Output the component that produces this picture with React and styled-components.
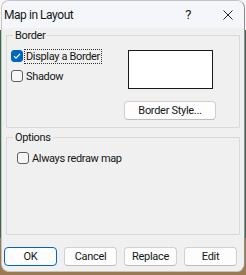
import React from 'react';
import styled, { createGlobalStyle } from 'styled-components';

const GlobalStyle = createGlobalStyle`
  html, body {
    margin: 0;
    padding: 0;
  }
  body {
    width: 246px;
    height: 275px;
    overflow: hidden;
    background: linear-gradient(#f6f6f8 0 30px, #3e6a48 30px 238px, #9b7a52 238px);
    font-family: Roboto, "Noto Sans", sans-serif;
    font-size: 11px;
    letter-spacing: -0.35px;
    color: #161616;
  }
`;

const Window = styled.div`
  box-sizing: border-box;
  margin-left: 1px;
  width: 244px;
  height: 272px;
  display: flex;
  flex-direction: column;
  background: #f0f0f0;
  border: 1px solid #c4c4c4;
  border-right-color: #8c8c8c;
  border-radius: 8px;
  overflow: hidden;
`;

const TitleBar = styled.div`
  height: 27px;
  flex: none;
  display: flex;
  align-items: center;
  padding-left: 2px;
  background: #f5f6f9;
  font-size: 12px;
  letter-spacing: -0.45px;
`;

const Title = styled.span`
  flex: 1;
`;

const TitleButton = styled.div`
  width: ${({ wide }) => wide}px;
  display: flex;
  justify-content: center;
  align-items: center;
  font-size: 13px;
  color: #222;
`;

const Body = styled.div`
  flex: 1;
  display: flex;
  flex-direction: column;
  padding: 1px 4px 0 4px;
`;

const Group = styled.fieldset`
  margin: 0 0 ${({ gap }) => gap}px 0;
  padding: 0;
  height: ${({ h }) => h}px;
  box-sizing: border-box;
  border: 1px solid #d9d9d9;
  border-radius: 1px;
  min-width: 0;
`;

const Legend = styled.legend`
  margin-left: 6px;
  padding: 0 2px;
  font-size: 11px;
  line-height: 13px;
`;

const BorderRow = styled.div`
  display: flex;
  padding: 7px 0 0 4px;
`;

const CheckColumn = styled.div`
  display: flex;
  flex-direction: column;
  gap: 6px;
  width: 113px;
`;

const CheckRow = styled.label`
  display: flex;
  align-items: center;
  gap: 1px;
  height: 14px;
  padding-left: ${({ inset }) => inset || 0}px;
`;

const Box = styled.span`
  box-sizing: border-box;
  width: 12px;
  height: 12px;
  flex: none;
  border-radius: 3px;
  border: 1px solid ${({ checked }) => (checked ? '#0067c0' : '#616161')};
  background: ${({ checked }) => (checked ? '#0067c0' : '#f6f6f6')};
  display: flex;
  align-items: center;
  justify-content: center;
`;

const CheckText = styled.span`
  padding: 0 1px;
  line-height: 13px;
  border: 1px dotted ${({ focused }) => (focused ? '#333' : 'transparent')};
`;

const PreviewColumn = styled.div`
  display: flex;
  flex-direction: column;
  align-items: center;
  width: 92px;
  padding-top: 1px;
`;

const Preview = styled.div`
  box-sizing: border-box;
  width: 85px;
  height: 39px;
  background: #fff;
  border: 1px solid #1a1a1a;
  margin-bottom: 12px;
`;

const Button = styled.button`
  box-sizing: border-box;
  width: ${({ w }) => w}px;
  height: 19px;
  padding: 0;
  font-family: inherit;
  font-size: 11px;
  letter-spacing: -0.3px;
  color: #161616;
  background: #fdfdfd;
  border: 1px solid ${({ primary }) => (primary ? '#0067c0' : '#d0d0d0')};
  border-bottom-color: ${({ primary }) => (primary ? '#0067c0' : '#bdbdbd')};
  border-radius: 4px;
`;

const OptionsBody = styled.div`
  padding-top: 7px;
`;

const ButtonRow = styled.div`
  display: flex;
  gap: 7px;
  margin-left: -2px;
`;

const Check = () => (
  <svg width="8" height="8" viewBox="0 0 8 8">
    <path d="M1 4.2 L3 6.2 L7 1.8" fill="none" stroke="#fff" strokeWidth="1.2" />
  </svg>
);

const Close = () => (
  <svg width="10" height="10" viewBox="0 0 10 10">
    <path d="M0.5 0.5 L9.5 9.5 M9.5 0.5 L0.5 9.5" stroke="#222" strokeWidth="1" />
  </svg>
);

const CheckBox = ({ checked, focused, inset, children }) => (
  <CheckRow inset={inset}>
    <Box checked={checked}>{checked && <Check />}</Box>
    <CheckText focused={focused}>{children}</CheckText>
  </CheckRow>
);

const App = () => (
  <>
    <GlobalStyle />
    <Window>
      <TitleBar>
        <Title>Map in Layout</Title>
        <TitleButton wide={48}>?</TitleButton>
        <TitleButton wide={32}>
          <Close />
        </TitleButton>
      </TitleBar>
      <Body>
        <Group h={99} gap={3}>
          <Legend>Border</Legend>
          <BorderRow>
            <CheckColumn>
              <CheckBox checked focused>Display a Border</CheckBox>
              <CheckBox>Shadow</CheckBox>
            </CheckColumn>
            <PreviewColumn>
              <Preview />
              <Button w={92}>Border Style...</Button>
            </PreviewColumn>
          </BorderRow>
        </Group>
        <Group h={104} gap={12}>
          <Legend>Options</Legend>
          <OptionsBody>
            <CheckBox inset={10}>Always redraw map</CheckBox>
          </OptionsBody>
        </Group>
        <ButtonRow>
          <Button w={53} primary>OK</Button>
          <Button w={53}>Cancel</Button>
          <Button w={53}>Replace</Button>
          <Button w={53}>Edit</Button>
        </ButtonRow>
      </Body>
    </Window>
  </>
);

export default App;
